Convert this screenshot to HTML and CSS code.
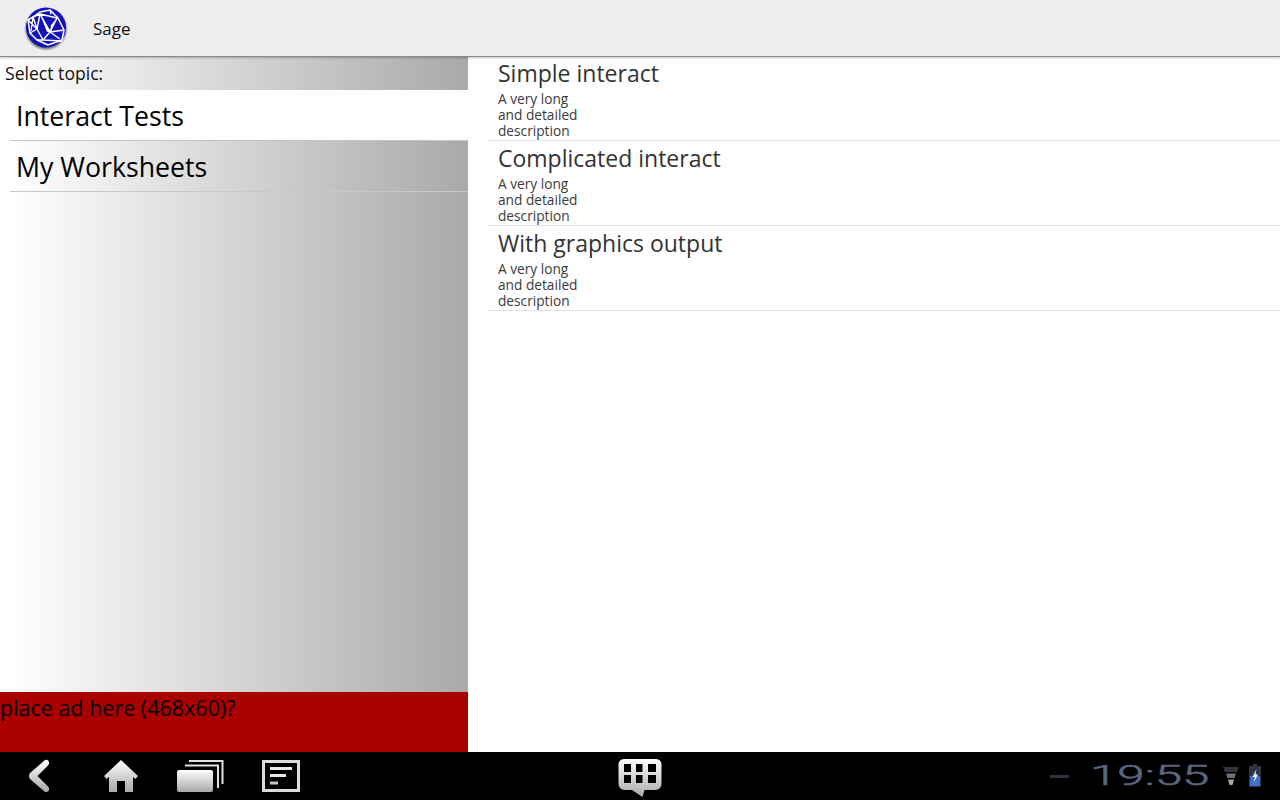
FILE: index.html
```html
<!DOCTYPE html>
<html lang="en">
<head>
<meta charset="utf-8">
<title>Sage</title>
<link rel="stylesheet" href="styles.css">
</head>
<body>
<div class="app">
  <header class="actionbar">
    <svg class="logo" width="44" height="46" viewBox="0 0 44 46">
      <defs>
        <radialGradient id="lgs" cx="50%" cy="50%" r="50%">
          <stop offset="85%" stop-color="#000" stop-opacity=".5"/>
          <stop offset="100%" stop-color="#000" stop-opacity="0"/>
        </radialGradient>
      </defs>
      <circle cx="22" cy="24" r="22" fill="url(#lgs)"/>
      <circle cx="22" cy="22.500" r="20" fill="#1212b8"/>
      <path d="M16 7 L26 5 L34 13 L40 25 L38 35 L24 40 L13 35 L6 28 L4 15 L9 12 Z" fill="none" stroke="#fff" stroke-width="1.500" stroke-linejoin="round"/>
      <path d="M16 9 L26 27 L33 13 Z M16 9 L9 12 L13 24 L6 28 M16 9 L13 24 L19 35 L26 27 L40 25 M26 27 L36 34 M19 35 L13 35 M19 35 L38 36 M4 15 L13 24 M26 5 L27 9 M9 12 L7 26" fill="none" stroke="#fff" stroke-width="1.400" stroke-linejoin="round"/>
      <path d="M16 9 L27 27 L23 27 Z M33 13 L26 27 L27 20 Z" fill="#fff"/>
    </svg>
    <span class="app-title">Sage</span>
  </header>
  <main class="content">
    <aside class="sidebar">
      <div class="sidebar-main">
        <div class="topic-label">Select topic:</div>
        <ul class="topics">
          <li class="topic selected">Interact Tests</li>
          <li class="topic">My Worksheets</li>
        </ul>
      </div>
      <div class="ad">place ad here (468x60)?</div>
    </aside>
    <section class="list">
      <article class="item">
        <h2 class="item-title">Simple interact</h2>
        <p class="item-desc">A very long<br>and detailed<br>description</p>
      </article>
      <article class="item">
        <h2 class="item-title">Complicated interact</h2>
        <p class="item-desc">A very long<br>and detailed<br>description</p>
      </article>
      <article class="item">
        <h2 class="item-title">With graphics output</h2>
        <p class="item-desc">A very long<br>and detailed<br>description</p>
      </article>
    </section>
  </main>
  <footer class="sysbar">
    <svg width="0" height="0" class="defs">
      <defs>
        <linearGradient id="ig" x1="0" y1="0" x2="0" y2="1">
          <stop offset="0" stop-color="#ffffff"/>
          <stop offset="1" stop-color="#a8a8a8"/>
        </linearGradient>
      </defs>
    </svg>
    <div class="nav-left">
      <svg class="nav-back" width="24" height="34" viewBox="0 0 24 34">
        <path d="M17.500 1.500 Q20 0 21.500 2 Q23 4.500 21 6.500 L10.500 17 L21 27.500 Q23 29.500 21.500 32 Q19.500 34 17.500 32.500 L3 20 Q1 17 3 14 Z" fill="url(#ig)"/>
      </svg>
      <svg class="nav-home" width="36" height="34" viewBox="0 0 36 34">
        <path d="M18 1 L35 17 L32.500 20 L30 18 V33 H22 V22 H14 V33 H6 V18 L3.500 20 L1 17 Z" fill="url(#ig)"/>
      </svg>
      <svg class="nav-recent" width="48" height="34" viewBox="0 0 48 34" fill="none">
        <path d="M13 2 H46.500 V25 M9 6.500 H42 V29" stroke="#e0e0e0" stroke-width="2"/>
        <rect x="1" y="11" width="36" height="22" rx="2" fill="url(#ig)"/>
      </svg>
      <svg class="nav-menu" width="38" height="32" viewBox="0 0 38 32" fill="none">
        <rect x="1.500" y="1.500" width="35" height="29" stroke="#dcdcdc" stroke-width="3"/>
        <path d="M8 8.500 H30 M8 15.500 H24" stroke="#e8e8e8" stroke-width="3"/>
        <path d="M8 23 H16" stroke="#c4c4c4" stroke-width="3"/>
      </svg>
    </div>
    <svg class="nav-apps" width="44" height="40" viewBox="0 0 44 40">
      <path fill-rule="evenodd" fill="url(#ig)" d="M7 1 H37 Q43.500 1 43.500 7 V25 Q43.500 32 37 32 H26.500 L24.500 39 L14 32 H7 Q0.500 32 0.500 25 V7 Q0.500 1 7 1 Z M6 6 V14 H13 V6 Z M18 6 V14 H24.500 V6 Z M30 6 V14 H38 V6 Z M6 17 V25 H13 V17 Z M18 17 V25 H24.500 V17 Z M30 17 V25 H38 V17 Z"/>
    </svg>
    <div class="status">
      <span class="dash"></span>
      <span class="clock">19:55</span>
      <svg width="16" height="22" viewBox="0 0 16 22" class="signal">
        <path d="M0 0 H16 L14 5 H2 Z" fill="#33363c"/>
        <path d="M3 6.500 H13 L11.500 11 H4.500 Z" fill="#6c7078"/>
        <path d="M5 12.500 H11 L9.500 18 H6.500 Z" fill="#a4a6aa"/>
      </svg>
      <svg width="14" height="24" viewBox="0 0 14 24" class="battery">
        <path d="M5 0 H9 V2 H12 Q13 2 13 3 V22 Q13 23 12 23 H2 Q1 23 1 22 V3 Q1 2 2 2 H5 Z" fill="#2c3446"/>
        <path d="M2 12 H12 V22 H2 Z" fill="#3f6fc4"/>
        <path d="M8.500 5 L4.500 13 H7 L5.500 19 L10 10.500 H7.500 Z" fill="#f0f4fb"/>
      </svg>
    </div>
  </footer>
</div>
</body>
</html>
```

FILE: styles.css
```css
* { box-sizing: border-box; }
html, body { margin: 0; padding: 0; }
body { font-family: "Open Sans", "Noto Sans", sans-serif; background: #fff; }
.app { width: 1280px; height: 800px; display: flex; flex-direction: column; overflow: hidden; }

.actionbar {
  height: 56px; flex: none; display: flex; align-items: center;
  background: #ededed;
  box-shadow: 0 1px 0 #8a8a8a, 0 2px 2px rgba(0,0,0,.25);
  position: relative; z-index: 1;
  padding-left: 24px;
}
.logo { flex: none; }
.app-title { margin-left: 25px; font-size: 17px; color: #111; }

.content { flex: 1; display: flex; min-height: 0; }
.sidebar { width: 468px; flex: none; display: flex; flex-direction: column; }
.sidebar-main { flex: 1; background: linear-gradient(to right, #fff 0, #fff 8px, #a9a9a9 100%); }
.topic-label { height: 34px; padding: 5px 0 0 5px; font-size: 17.600px; line-height: 24px; color: #111; }
.topics { list-style: none; margin: 0; padding: 0 0 0 10px; }
.topic {
  height: 51px; padding: 2px 0 0 6px; font-size: 26.700px; line-height: 48px;
  color: #000; border-bottom: 1px solid #c8c8c8;
}
.topic.selected { background: #fff; border-bottom-color: #c4c4c4; }
.ad { height: 60px; flex: none; background: #aa0000; color: #000; font-size: 21.500px; line-height: 32px; }

.list { flex: 1; padding: 0 0 0 20px; }
.item { height: 85px; padding: 2px 0 0 10px; border-bottom: 1px solid #e2e2e2; color: #333; }
.item-title { margin: 0; font-weight: 400; font-size: 23px; line-height: 30px; color: #333; }
.item-desc { margin: 0; font-size: 13.700px; line-height: 16px; color: #3a3a3a; padding-top: 3px; }

.sysbar { height: 48px; flex: none; background: #000; display: flex; align-items: center; position: relative; }
.defs { position: absolute; }
.nav-left { display: flex; align-items: center; width: 606px; }
.nav-back { margin-left: 27px; }
.nav-home { margin-left: 52px; }
.nav-recent { margin-left: 37px; }
.nav-menu { margin-left: 38px; }
.nav-apps { margin-left: 12px; margin-top: 3px; }
.status { margin-left: auto; display: flex; align-items: center; padding-right: 18px; }
.dash { width: 19px; height: 3px; background: #2c3244; margin-right: 21px; }
.clock {
  width: 120px; font-family: "Roboto", sans-serif; font-weight: 300; font-size: 27px; line-height: 30px;
  color: #5b6680; -webkit-text-stroke: .5px #5b6680;
  transform: scaleX(1.820); transform-origin: left center; white-space: nowrap;
}
.signal { margin-left: 13px; margin-top: 3px; }
.battery { margin-left: 9px; }
```
